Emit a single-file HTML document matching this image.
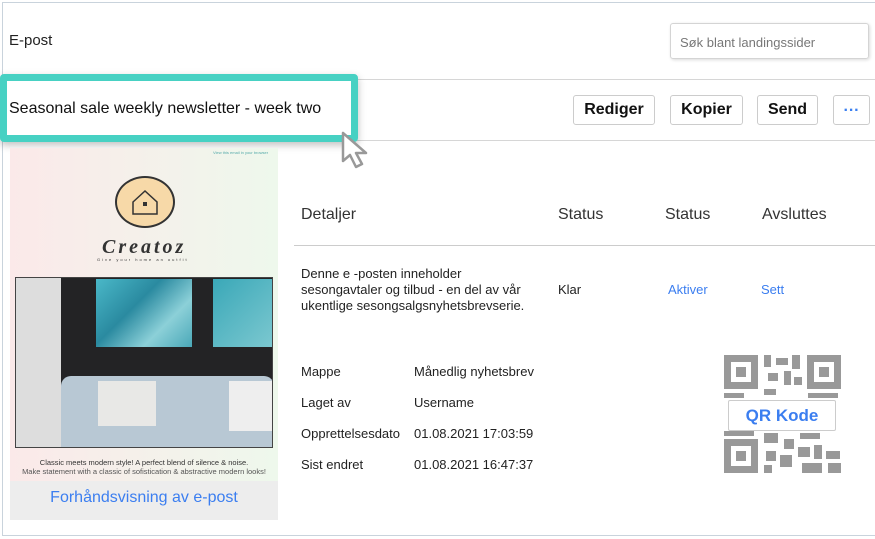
<!DOCTYPE html>
<html><head><meta charset="utf-8"><style>
*{margin:0;padding:0;box-sizing:border-box}
body{width:875px;height:539px;background:#fff;font-family:"Liberation Sans",Arial,sans-serif;position:relative;overflow:hidden;color:#222}
.a{position:absolute}
.btn{position:absolute;top:95px;height:30px;border:1px solid #ccc;border-radius:3px;background:#fff;font-weight:bold;font-size:16px;text-align:center;line-height:28px;color:#111}
.t{font-size:13px;color:#222}
.h{font-size:16px;color:#333}
</style></head><body>
<div class="a" style="left:2px;top:2px;width:873px;height:534px;border:1px solid #c9d3dc;border-right:none"></div>
<div class="a" style="left:9px;top:32px;font-size:15px;color:#222">E-post</div>
<div class="a" style="left:670px;top:23px;width:199px;height:36px;border:1px solid #d4d4d4;border-radius:3px;box-shadow:1px 1px 3px rgba(0,0,0,.15);font-size:13px;color:#777;padding:11px 0 0 9px">Søk blant landingssider</div>
<div class="a" style="left:3px;top:79px;width:872px;height:1px;background:#d6d6d6"></div>
<div class="a" style="left:3px;top:140px;width:872px;height:1px;background:#d6d6d6"></div>
<div class="a" style="left:0;top:74px;width:358px;height:68px;border:7px solid #47d1c3;border-radius:4px;box-shadow:0 3px 8px rgba(0,0,0,.25);background:#fff"></div>
<div class="a" style="left:9px;top:100px;font-size:16px;color:#111">Seasonal sale weekly newsletter - week two</div>
<svg class="a" style="left:338px;top:130px" width="40" height="42" viewBox="0 0 40 42"><path d="M5 3 L5 31 L12 25 L18 37 L24 34 L18 23 L28 23 Z" fill="#fff" stroke="#999" stroke-width="2.5" stroke-linejoin="round"/></svg>
<div class="btn" style="left:573px;width:82px">Rediger</div>
<div class="btn" style="left:670px;width:73px">Kopier</div>
<div class="btn" style="left:757px;width:61px">Send</div>
<div class="btn" style="left:833px;width:37px;color:#3a7ff0;line-height:30px;font-size:16px">···</div>
<div class="a" style="left:10px;top:148px;width:268px;height:372px;background:linear-gradient(90deg,#fbe9e9,#eef8ec);"></div>
<div class="a" style="left:213px;top:150px;font-size:4px;color:#5aa">View this email in your browser</div>
<div class="a" style="left:115px;top:176px;width:60px;height:52px;border-radius:50%;background:#f7d9a8;border:2px solid #333"></div>
<svg class="a" style="left:130px;top:188px" width="30" height="28"><path d="M3 14 L15 3 L27 14 L27 26 L3 26 Z" fill="none" stroke="#333" stroke-width="1.5"/><rect x="13" y="14" width="4" height="4" fill="#333"/></svg>
<div class="a" style="left:102px;top:236px;font-family:'Liberation Serif',serif;font-style:italic;font-weight:bold;font-size:20px;letter-spacing:3px;color:#333">Creatoz</div>
<div class="a" style="left:97px;top:257px;font-size:4px;letter-spacing:2px;color:#333">Give your home an outfit</div>
<div class="a" style="left:15px;top:277px;width:258px;height:171px;background:#232325;border:1px solid #444;overflow:hidden">
<div class="a" style="left:0;top:0;width:45px;height:171px;background:#ddd"></div>
<div class="a" style="left:80px;top:1px;width:96px;height:68px;background:linear-gradient(135deg,#4ab8c8,#2a8aa0 40%,#8cd0d8 70%,#4aa8b8)"></div>
<div class="a" style="left:197px;top:1px;width:60px;height:68px;background:linear-gradient(135deg,#3aa8b8,#7cc8d0)"></div>
<div class="a" style="left:45px;top:98px;width:213px;height:73px;background:#b8c8d4;border-radius:10px 10px 0 0"></div>
<div class="a" style="left:82px;top:103px;width:58px;height:45px;background:#e8e8e6"></div>
<div class="a" style="left:213px;top:103px;width:45px;height:50px;background:#eee"></div>
</div>
<div class="a" style="left:10px;top:458px;width:268px;text-align:center;font-size:7.5px;color:#333">Classic meets modern style! A perfect blend of silence &amp; noise.<br><span style="color:#555">Make statement with a classic of sofistication &amp; abstractive modern looks!</span></div>
<div class="a" style="left:10px;top:481px;width:268px;height:39px;background:#ededed;color:#3b7ef0;font-size:16px;text-align:center;line-height:34px">Forhåndsvisning av e-post</div>
<div class="a h" style="left:301px;top:206px">Detaljer</div>
<div class="a h" style="left:558px;top:206px">Status</div>
<div class="a h" style="left:665px;top:206px">Status</div>
<div class="a h" style="left:762px;top:206px">Avsluttes</div>
<div class="a" style="left:294px;top:245px;width:581px;height:1px;background:#ccc"></div>
<div class="a t" style="left:301px;top:266px;line-height:16px">Denne e -posten inneholder<br>sesongavtaler og tilbud - en del av vår<br>ukentlige sesongsalgsnyhetsbrevserie.</div>
<div class="a t" style="left:558px;top:282px">Klar</div>
<div class="a t" style="left:668px;top:282px;color:#3b7ef0">Aktiver</div>
<div class="a t" style="left:761px;top:282px;color:#3b7ef0">Sett</div>
<div class="a t" style="left:301px;top:356px;line-height:31px">Mappe<br>Laget av<br>Opprettelsesdato<br>Sist endret</div>
<div class="a t" style="left:414px;top:356px;line-height:31px">Månedlig nyhetsbrev<br>Username<br>01.08.2021 17:03:59<br>01.08.2021 16:47:37</div>
<svg class="a" style="left:724px;top:355px" width="117" height="118" viewBox="0 0 117 118" fill="#999">
<path d="M0 0h34v34H0zM7 7v20h20V7z"/><rect x="12" y="12" width="10" height="10"/>
<path d="M83 0h34v34H83zM90 7v20h20V7z"/><rect x="95" y="12" width="10" height="10"/>
<path d="M0 84h34v34H0zM7 91v20h20V91z"/><rect x="12" y="96" width="10" height="10"/>
<rect x="40" y="0" width="7" height="12"/><rect x="52" y="3" width="12" height="7"/><rect x="68" y="0" width="8" height="14"/><rect x="44" y="18" width="10" height="8"/><rect x="60" y="16" width="7" height="14"/><rect x="70" y="22" width="8" height="8"/><rect x="0" y="38" width="20" height="5"/><rect x="40" y="34" width="12" height="6"/><rect x="84" y="38" width="30" height="5"/>
<rect x="0" y="76" width="30" height="5"/><rect x="40" y="78" width="14" height="10"/><rect x="60" y="84" width="10" height="10"/><rect x="76" y="78" width="20" height="6"/><rect x="42" y="96" width="10" height="10"/><rect x="56" y="100" width="12" height="12"/><rect x="74" y="92" width="12" height="10"/><rect x="90" y="90" width="8" height="14"/><rect x="102" y="96" width="14" height="8"/><rect x="40" y="110" width="8" height="8"/><rect x="78" y="108" width="20" height="10"/><rect x="104" y="108" width="13" height="10"/>
</svg>
<div class="a" style="left:728px;top:400px;width:108px;height:31px;background:#fff;border:1px solid #ccc;border-radius:2px;color:#3b7ef0;font-weight:bold;font-size:17px;text-align:center;line-height:29px">QR Kode</div>
</body></html>
